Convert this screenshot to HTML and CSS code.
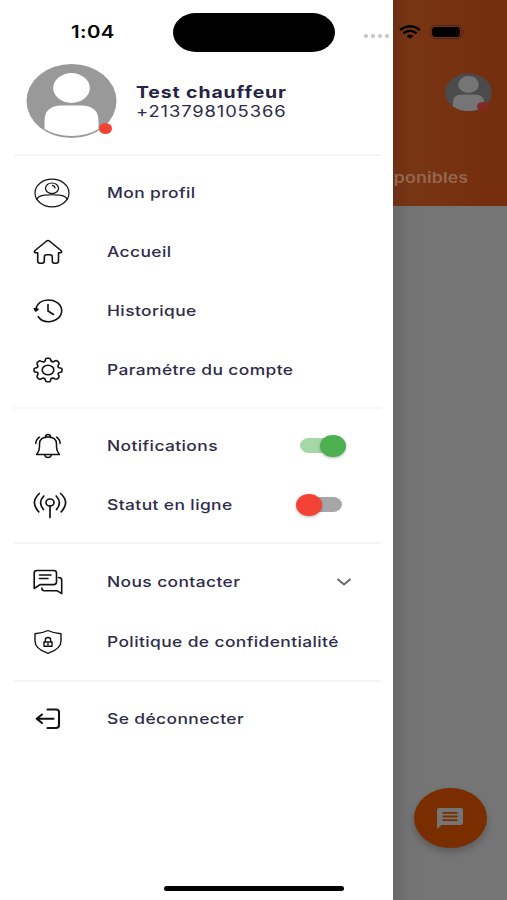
FILE: index.html
```html
<!DOCTYPE html>
<html lang="fr">
<head>
    <meta charset="UTF-8">
    <meta name="viewport" content="width=device-width, initial-scale=1.0">
    <title>Menu chauffeur</title>
    <link rel="stylesheet" href="styles.css">
</head>
<body>
    <div class="screen">
        <aside class="drawer">
            <header class="profile">
                <div class="avatar">
                    <svg width="91" height="75" viewBox="0 0 91 75">
                        <ellipse cx="45.5" cy="37" rx="45" ry="37" fill="#999"/>
                        <ellipse cx="45.5" cy="24" rx="18.3" ry="15" fill="#fff"/>
                        <path d="M18.5 65V57Q18.5 41.5 36 41.5H55Q72.5 41.5 72.5 57V65Q61 72 45.5 72T18.5 65Z" fill="#fff"/>
                    </svg>
                    <span class="dot"></span>
                </div>
                <div class="who">
                    <div class="text name">Test chauffeur</div>
                    <div class="text phone">+213798105366</div>
                </div>
            </header>
            <nav class="group main">
                <a class="item">
                    <svg class="icon profil" width="38" height="32" viewBox="0 0 38 32" stroke-width="1.2">
                        <ellipse cx="19" cy="16" rx="17" ry="13.8"/>
                        <ellipse cx="19" cy="11.3" rx="6.5" ry="5.3"/>
                        <path d="M4 22.3C5 19.500 8 18.500 11.500 18.200Q19 17.300 26.500 18.200C30 18.500 33 19.500 34 22.300M19.500 8.300Q22 9 22 11"/>
                    </svg>
                    <span class="text">Mon profil</span>
                </a>
                <a class="item">
                    <svg class="icon" width="30" height="26" viewBox="0 0 30 26" stroke-width="1.6">
                        <path d="M15 1.5Q15.8 1.5 17 2.5L28 11.5Q29.5 13.3 27.5 13.7H25.5V22Q25.5 24.2 23 24.2H21.5Q19.3 24.2 19.3 22V18Q19.3 15.7 17 15.7H13.5Q11.3 15.7 11.3 18V22Q11.3 24.2 9 24.2H7Q4.7 24.2 4.7 22V13.7H2.5Q.5 13.3 2 11.5L13 2.5Q14.2 1.5 15 1.5Z"/>
                    </svg>
                    <span class="text">Accueil</span>
                </a>
                <a class="item">
                    <svg class="icon" width="30" height="26" viewBox="0 0 30 26" stroke-width="1.6">
                        <path d="M2.8 11.5C4 5.500 9 2 15.300 2C23 2 28.700 7 28.700 12.800S23 23.700 15.300 23.700C11 23.700 7.500 22 5.300 18.700M15 6.500V13L20.500 16.500"/>
                        <path d="M1.3 10.7L5 11.3L2.7 13Z" fill="#111"/>
                    </svg>
                    <span class="text">Historique</span>
                </a>
                <a class="item">
                    <svg class="icon" width="30" height="26" viewBox="0 0 30 26" stroke-width="1.6">
                        <path d="M12.5 2.5Q12.5 1.2 14 1.2H16Q17.5 1.2 17.5 2.5Q18 5 20.3 4.9L22.3 3.8Q23.5 3.2 24.5 4.2L25.7 5.3Q26.5 6.2 25.8 7.3Q24 9.8 26 10.8L27.7 11Q29 11.3 29 12.2V13.9Q29 15 27.6 15.2Q24.5 15.8 25.3 17.7L26 18.9Q26.5 20 25.5 20.8L24.2 21.9Q23.2 22.6 22 21.9Q19 20.2 17.8 22.2L17.5 23.7Q17.2 24.8 16 24.8H14Q12.7 24.8 12.5 23.7Q12 20.7 9.7 21.1L8 22Q6.8 22.6 5.8 21.8L4.5 20.7Q3.6 19.8 4.2 18.8Q6 16 4 15.3L2.3 15Q1 14.8 1 13.7V12.2Q1 11.2 2.3 11Q5.5 10.5 4.8 8.4L4.1 7.2Q3.6 6.2 4.5 5.3L5.7 4.3Q6.7 3.4 7.9 4.1Q11 5.8 12.1 4Z"/>
                        <ellipse cx="15" cy="13" rx="5.8" ry="4.8"/>
                    </svg>
                    <span class="text">Paramétre du compte</span>
                </a>
            </nav>
            <nav class="group prefs">
                <div class="item">
                    <svg class="icon" width="30" height="26" viewBox="0 0 30 26" stroke-width="1.5">
                        <path d="M3.5 21.5Q6.5 18 6.5 14V11Q6.5 4 15 4T23.5 11V14Q23.5 18 26.5 21.5ZM12.5 4Q12.5 1.5 15 1.5T17.5 4M11.5 21.5Q12 24.5 15 24.5T18.5 21.5M2.8 10.5Q3 6.5 6.5 4.2M27.2 10.5Q27 6.5 23.5 4.2"/>
                    </svg>
                    <span class="text">Notifications</span>
                    <span class="switch on"></span>
                </div>
                <div class="item">
                    <svg class="icon antenna" width="34" height="28" viewBox="0 0 34 28" stroke-width="1.7">
                        <ellipse cx="17" cy="11.5" rx="4" ry="3.5"/>
                        <path d="M17 15V26.5M10.8 5Q4.5 11.5 10.5 18.5M23.2 5Q29.5 11.5 23.5 18.5M6.3 2.5Q-3.3 11.5 5.8 20.8M27.7 2.5Q37.3 11.5 28.2 20.8"/>
                    </svg>
                    <span class="text">Statut en ligne</span>
                    <span class="switch off"></span>
                </div>
            </nav>
            <nav class="group help">
                <a class="item">
                    <svg class="icon" width="30" height="26" viewBox="0 0 30 26" stroke-width="1.6">
                        <path d="M4 1.5H20.5Q23.5 1.5 23.5 4V13Q23.5 15.6 20.5 15.6H7L1.2 19.5V4Q1.2 1.5 4 1.5ZM6.5 6H18M6.5 9.5H15M25.5 8.5Q28.7 8.5 28.7 11V24.7L24 21.7H11.5Q8.8 21.7 8.8 19"/>
                    </svg>
                    <span class="text">Nous contacter</span>
                    <svg class="chevron" width="16" height="10" viewBox="0 0 16 10"><path d="M1.5 2L8 7.5L14.5 2"/></svg>
                </a>
                <a class="item">
                    <svg class="icon" width="30" height="26" viewBox="0 0 30 26" stroke-width="1.4">
                        <path d="M15 1.5Q20.5 4.3 28 4.7V12Q28 20 15 24.3Q2 20 2 12V4.7Q9.5 4.3 15 1.5Z"/>
                        <path d="M11 13H19V17.3H11ZM12.3 13V11Q12.3 8.5 15 8.5T17.7 11V13M15 14.5V15.7"/>
                    </svg>
                    <span class="text">Politique de confidentialité</span>
                </a>
            </nav>
            <nav class="group logout">
                <a class="item">
                    <svg class="icon" width="30" height="26" viewBox="0 0 30 26" stroke-width="2.1">
                        <path d="M14.5 3.5H23Q26 3.5 26 6V19Q26 22 23 22H14.5M20.5 12.8H4M9 8.5L3.7 12.8L9 17"/>
                    </svg>
                    <span class="text">Se déconnecter</span>
                </a>
            </nav>
        </aside>

        <main class="page">
            <div class="banner">
                <div class="avatar small">
                    <svg width="47" height="39" viewBox="0 0 47 39">
                        <ellipse cx="23.5" cy="19.5" rx="23.3" ry="19" fill="#4b4b4b"/>
                        <ellipse cx="23.5" cy="11.5" rx="10.3" ry="8.5" fill="#757575"/>
                        <path d="M8 33.5V29Q8 21.5 17 21.5H30Q39 21.5 39 29V33.5Q32 38 23.5 38T8 33.5Z" fill="#757575"/>
                    </svg>
                    <span class="dot"></span>
                </div>
                <div class="text title">sponibles</div>
            </div>
            <button class="fab" aria-label="Messages">
                <svg width="28" height="23" viewBox="0 0 28 23">
                    <path d="M3 1H25Q27 1 27 3V16Q27 18 25 18H5.5L1 22V3Q1 1 3 1Z" fill="#757575"/>
                    <path d="M6.5 5.8H21.5M6.5 9.5H21.5M6.5 13.2H21.5" stroke="#7a2e00" stroke-width="1.8"/>
                </svg>
            </button>
        </main>

        <div class="statusbar">
            <span class="text time">1:04</span>
            <span class="island"></span>
            <span class="signal"><i></i><i></i><i></i><i></i></span>
            <svg class="wifi" width="22" height="14" viewBox="0 0 22 14" fill="none" stroke="#000" stroke-width="2.5">
                <path d="M1 5Q11-2.5 21 5M4.5 8.2Q11 3.3 17.5 8.2"/>
                <path d="M7.5 11Q11 8 14.5 11L11 13.8Z" fill="#000" stroke="none"/>
            </svg>
            <svg class="battery" width="36" height="14" viewBox="0 0 36 14">
                <rect x=".5" y=".5" width="31" height="13" rx="4.5" fill="none" stroke="#4c2714"/>
                <rect x="2.2" y="2" width="27.6" height="10" rx="3.2"/>
                <path d="M33 5Q35 7 33 9Z" fill="#4c2714"/>
            </svg>
        </div>
        <div class="home-bar"></div>
    </div>
</body>
</html>
```

FILE: styles.css
```css
* {
    box-sizing: border-box;
}
body {
    margin: 0;
    font-family: Inter, "Liberation Sans", sans-serif;
    font-size: 14.5px;
    color: #2f2b4a;
}
.screen {
    position: relative;
    display: flex;
    width: 507px;
    height: 900px;
    overflow: hidden;
    background: #757575;
}
svg {
    display: block;
    flex: none;
}

/* labels are wider than the font's own shapes */
.text {
    display: inline-block;
    font-weight: 500;
    line-height: 20px;
    letter-spacing: 0.33px;
    white-space: nowrap;
    transform: scaleX(1.2);
    transform-origin: left center;
}

/* drawer */
.drawer {
    width: 392.5px;
    flex: none;
    padding: 64px 12px 0 14px;
    background: #fff;
}
.profile {
    display: flex;
    align-items: flex-start;
    height: 90px;
    padding-left: 12px;
}
.avatar {
    position: relative;
}
.dot {
    position: absolute;
    right: 5px;
    bottom: 5px;
    width: 13px;
    height: 11px;
    border-radius: 50%;
    background: #f44336;
}
.who {
    display: flex;
    flex-direction: column;
    padding: 18px 0 0 19px;
}
.name {
    font-size: 16.2px;
    font-weight: 700;
    letter-spacing: 0.75px;
    color: #272344;
}
.phone {
    font-size: 15.3px;
    font-weight: 400;
    letter-spacing: 0.75px;
}
.group {
    border-top: 2px solid #f5f5f5;
}
.main {
    height: 253px;
    padding-top: 7px;
}
.prefs {
    height: 135px;
    padding-top: 7px;
}
.help {
    height: 138px;
    padding-top: 8px;
}
.logout {
    padding-top: 7px;
}
.item {
    display: flex;
    align-items: center;
    height: 59px;
    padding-left: 19px;
}
.help .item {
    height: 60px;
}
.icon {
    width: 30px;
    margin-right: 44px;
    fill: none;
    stroke: #111;
    stroke-linecap: round;
    stroke-linejoin: round;
}
.profil {
    width: 38px;
    margin-right: 36px;
}
.antenna {
    width: 34px;
    margin-right: 40px;
}
.switch {
    display: flex;
    align-items: center;
    width: 40px;
    height: 15px;
    margin-left: auto;
    border-radius: 9px / 7.5px;
}
.switch::before {
    content: "";
    flex: none;
    width: 26px;
    height: 22px;
    border-radius: 50%;
    box-shadow: 0 1px 3px rgba(0,0,0,0.3);
}
.on {
    margin-right: 41px;
    justify-content: flex-end;
    background: #a5d7a7;
}
.on::before {
    margin-right: -6px;
    background: #4caf50;
}
.off {
    margin-right: 39px;
    background: #a6a6a6;
}
.off::before {
    margin-left: -6px;
    background: #f44336;
}
.chevron {
    margin: 0 29px 0 auto;
    fill: none;
    stroke: #6b6b6b;
    stroke-width: 2;
}

/* page under the scrim */
.page {
    display: flex;
    flex: 1;
    flex-direction: column;
    align-items: flex-end;
    justify-content: space-between;
    overflow: hidden;
    background: linear-gradient(90deg, #686868, #737373 16px, #757575 30px);
}
.banner {
    display: flex;
    flex-direction: column;
    align-items: flex-end;
    width: 100%;
    height: 206px;
    padding: 73px 15px 0 0;
    background: linear-gradient(90deg, #6b3014, #783513 18px, #742d0d);
}
.small .dot {
    right: 4px;
    bottom: 1px;
    width: 11px;
    height: 9px;
    background: #842a26;
}
.title {
    margin: 56px 24px 0 0;
    font-size: 14.8px;
    font-weight: 600;
    letter-spacing: 0.1px;
    color: #94664f;
    transform-origin: right center;
}
.fab {
    display: flex;
    align-items: center;
    justify-content: center;
    width: 73px;
    height: 60px;
    margin: 0 20.5px 52px 0;
    padding: 0;
    border: 0;
    border-radius: 50%;
    background: #7a2e00;
    box-shadow: 0 4px 7px rgba(0,0,0,0.22);
}

/* system bars */
.statusbar {
    position: absolute;
    top: 12px;
    left: 0;
    display: flex;
    align-items: center;
    width: 507px;
    height: 40px;
    padding-left: 71px;
}
.time {
    width: 102px;
    font-size: 17px;
    font-weight: 600;
    color: #000;
}
.island {
    width: 162px;
    height: 39px;
    border-radius: 23px / 19.5px;
    background: #000;
}
.signal {
    display: flex;
    gap: 3px;
    margin: 8px 10px 0 29px;
}
.signal i {
    width: 4px;
    height: 4px;
    border-radius: 50%;
    background: #c4c4c4;
}
.battery {
    margin-left: 9px;
}
.home-bar {
    position: absolute;
    bottom: 9px;
    left: 164px;
    width: 180px;
    height: 5px;
    border-radius: 3px;
    background: #000;
}
```
